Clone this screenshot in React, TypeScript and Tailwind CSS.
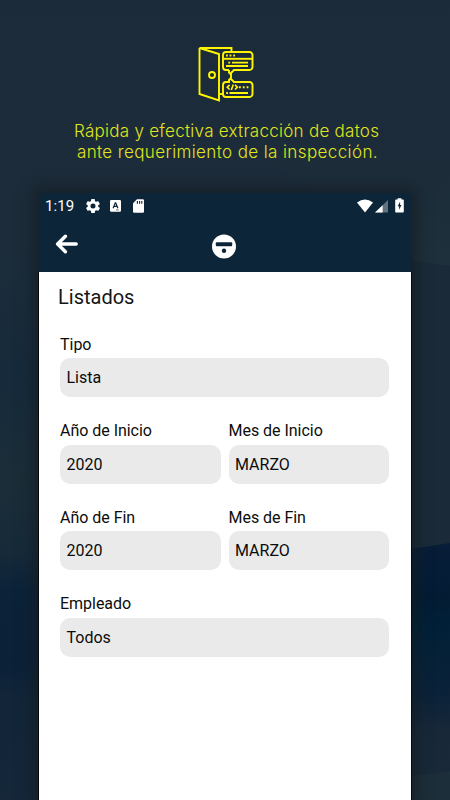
interface FieldProps {
  label: string;
  value: string;
}

function Field({ label, value }: FieldProps) {
  return (
    <div className="flex-1 min-w-0">
      <div className="h-[23.5px] text-[16px] leading-[19px] tracking-[-0.03px] text-[#0c0c0c]">{label}</div>
      <div className="h-[39px] rounded-[10px] bg-[#eaeaea] px-[6.5px] text-[16px] leading-[39px] text-[#0c0c0c]">
        {value}
      </div>
    </div>
  );
}

const ROWS: FieldProps[][] = [
  [{ label: 'Tipo', value: 'Lista' }],
  [{ label: 'Año de Inicio', value: '2020' }, { label: 'Mes de Inicio', value: 'MARZO' }],
  [{ label: 'Año de Fin', value: '2020' }, { label: 'Mes de Fin', value: 'MARZO' }],
  [{ label: 'Empleado', value: 'Todos' }],
];

const TAGLINE = [
  { text: 'Rápida y efectiva extracción de datos', className: 'tracking-[0.27px]' },
  { text: 'ante requerimiento de la inspección.', className: 'tracking-[0.39px]' },
];

function Backdrop() {
  return (
    <svg className="absolute inset-0" width="450" height="800" viewBox="0 0 450 800">
      <defs>
        <linearGradient id="left" x1="0" y1="0" x2="0" y2="1">
          <stop offset="0" stopColor="#1c2b39" />
          <stop offset="0.3" stopColor="#1c2c3a" />
          <stop offset="0.48" stopColor="#162a3b" />
          <stop offset="0.6" stopColor="#1b2d38" />
          <stop offset="0.69" stopColor="#162a39" />
          <stop offset="0.74" stopColor="#0b2239" />
          <stop offset="0.83" stopColor="#0b2138" />
          <stop offset="0.87" stopColor="#122539" />
          <stop offset="1" stopColor="#152739" />
        </linearGradient>
        <linearGradient id="upper" x1="0" y1="130" x2="0" y2="262" gradientUnits="userSpaceOnUse">
          <stop offset="0" stopColor="#1c2b39" />
          <stop offset="1" stopColor="#1e303c" />
        </linearGradient>
        <linearGradient id="right" x1="0" y1="540" x2="0" y2="800" gradientUnits="userSpaceOnUse">
          <stop offset="0" stopColor="#081d38" />
          <stop offset="0.22" stopColor="#031c34" />
          <stop offset="0.32" stopColor="#002037" />
          <stop offset="0.6" stopColor="#0b2239" />
          <stop offset="0.74" stopColor="#182838" />
          <stop offset="1" stopColor="#192938" />
        </linearGradient>
      </defs>
      <rect width="450" height="800" fill="url(#left)" />
      <path d="M225 130H450V266L411 260Z" fill="url(#upper)" />
      <path d="M411 261L450 266V544L411 549Z" fill="#1a2a38" />
      <path d="M411 549L450 543V800H411Z" fill="url(#right)" />
      <path d="M411 776L450 771V800H411Z" fill="#1c2e39" />
    </svg>
  );
}

function DoorIcon() {
  return (
    <svg width="56" height="56" viewBox="0 0 56 56" fill="none" stroke="#fff500" strokeWidth="1.9">
      <path d="M1.5 2V48L21 54.5V8L1.5 2H33.5V5.5" />
      <path d="M21 48H25" />
      <circle cx="14" cy="29" r="3" />
      <path d="M31 24H28A3 3 0 0 1 25 21V9A3 3 0 0 1 28 6H51.5A3 3 0 0 1 54.5 9V21A3 3 0 0 1 51.5 24H36L33 27V33L36 36H51.5A3 3 0 0 1 54.5 39V48A3 3 0 0 1 51.5 51H28A3 3 0 0 1 25 48V39A3 3 0 0 1 28 36H31V34L33 32" />
      <path d="M31 24V26.5L33 28.5" />
      <path d="M25 12.8H54.5" />
      <path d="M28 9.4H37.5" strokeWidth="2" strokeDasharray="1.8 1.8" />
      <path d="M30.3 16.6H32.2M34 16.6H50M28 20H50" />
      <path d="M31.7 38.9L29.2 41.2L31.7 43.5M37 38.9L39.4 41.2L37 43.5M35.3 38.4L33.3 44" strokeWidth="1.6" />
      <path d="M41 41.2H50.5" strokeWidth="2" strokeDasharray="1.8 2" />
      <path d="M28.2 47H30M31.5 47H50" />
    </svg>
  );
}

function StatusBar() {
  return (
    <div className="flex h-[26px] items-center pl-[6px] pr-[7px]">
      <span className="w-[41px] text-[15px] leading-[26px] tracking-[0.1px] text-white">1:19</span>
      <svg width="14" height="14" viewBox="2 2 20 20" fill="#fff">
        <path d="M19.4 13a7.5 7.5 0 0 0 0-2l2.1-1.6a.5.5 0 0 0 .1-.7l-2-3.4a.5.5 0 0 0-.6-.2l-2.5 1a7 7 0 0 0-1.7-1L14.5 2.5A.5.5 0 0 0 14 2h-4a.5.5 0 0 0-.5.4l-.4 2.7a7 7 0 0 0-1.7 1l-2.5-1a.5.5 0 0 0-.6.2l-2 3.4a.5.5 0 0 0 .1.7L4.5 11a8 8 0 0 0 0 2l-2.1 1.6a.5.5 0 0 0-.1.7l2 3.4c.1.2.4.3.6.2l2.5-1a7 7 0 0 0 1.7 1l.4 2.6c0 .3.2.5.5.5h4c.3 0 .5-.2.5-.5l.4-2.6a7 7 0 0 0 1.7-1l2.5 1c.2.1.5 0 .6-.2l2-3.4a.5.5 0 0 0-.1-.7ZM12 15.6a3.6 3.6 0 1 1 0-7.2 3.6 3.6 0 0 1 0 7.2Z" />
      </svg>
      <svg className="ml-[10px]" width="11" height="12" viewBox="0 0 11 12">
        <rect width="11" height="11.7" rx="1.2" fill="#fff" />
        <path d="M3.1 8.2L5.3 2.8H5.7L7.9 8.2M4 6.4H7" fill="none" stroke="#0d2538" strokeWidth="1.2" />
        <path d="M6 9.9H8.8" stroke="#0d2538" strokeWidth="0.6" />
      </svg>
      <svg className="ml-[12px]" width="11" height="14" viewBox="0 0 11 14">
        <path d="M4 0.3H9.8A1.2 1.2 0 0 1 11 1.5V12.5A1.2 1.2 0 0 1 9.8 13.7H1.2A1.2 1.2 0 0 1 0 12.5V4.3Z" fill="#fff" />
        <path d="M4.4 2V4.7M6.6 2V4.7M8.8 2V4.7" stroke="#0d2538" strokeWidth="1.1" />
      </svg>
      <div className="-mt-px ml-auto flex items-center">
        <svg width="16" height="14" viewBox="0 0 16 14">
          <path d="M0 3.4Q8-2.6 16 3.4L8 13.4Z" fill="#fff" />
        </svg>
        <svg className="ml-[2px]" width="13" height="14" viewBox="0 0 13 14">
          <path d="M13 0.9V13.6H0Z" fill="#5f7280" />
          <path d="M7.6 6.2V13.6H0Z" fill="#fff" />
        </svg>
        <svg className="ml-[7px]" width="9" height="15" viewBox="0 0 9 15">
          <path d="M2.6 0.3H6.4V1.6H8A0.8 0.8 0 0 1 8.8 2.4V13.8A0.8 0.8 0 0 1 8 14.6H1A0.8 0.8 0 0 1 0.2 13.8V2.4A0.8 0.8 0 0 1 1 1.6H2.6Z" fill="#fff" />
          <path d="M5.1 3.8L2.6 8.3H4.1V11.8L6.5 7.1H5.1Z" fill="#0d2538" />
        </svg>
      </div>
    </div>
  );
}

export default function App() {
  return (
    <div className="relative h-[800px] w-[450px] overflow-hidden bg-[#1c2b39]">
      <Backdrop />
      <div className="relative flex h-full flex-col items-center">
        <div className="mt-[46px] ml-[2px] h-[56px] w-[56px]">
          <DoorIcon />
        </div>
        <div
          className="mt-[19px] ml-[2px] h-[72px] w-[304px] whitespace-nowrap text-right text-[17px] font-light leading-[20.5px] text-[#e0e71b]"
          style={{ fontFamily: 'Inter, sans-serif' }}
        >
          {TAGLINE.map(line => (
            <div key={line.text} className={line.className}>{line.text}</div>
          ))}
        </div>

        {/* Phone */}
        <div
          className="h-[607px] w-[372px] bg-white shadow-[0_0_14px_5px_rgba(20,28,34,0.75)]"
          style={{ fontFamily: 'Roboto, sans-serif' }}
        >
          <header className="h-[79px] bg-[#0d2538]">
            <StatusBar />
            <div className="grid h-[53px] grid-cols-3 items-center px-[13px]">
              <svg className="-mt-[4px] ml-[3px]" width="24" height="20" viewBox="0 0 24 20" fill="none" stroke="#fff" strokeWidth="3.4" strokeLinecap="round" strokeLinejoin="round">
                <path d="M10.4 2.3L2.6 10L10.4 17.7M2.8 10H21.2" />
              </svg>
              <svg className="mt-px mr-px justify-self-center" width="25" height="25" viewBox="0 0 25 25">
                <circle cx="12" cy="12.5" r="12" fill="#fff" />
                <rect x="3.8" y="8.3" width="16.4" height="4" rx="1" fill="#0d2538" />
                <circle cx="12" cy="16.8" r="2.2" fill="#0d2538" />
              </svg>
            </div>
          </header>
          <main className="h-[528px] pl-[21px] pr-[22px] pt-[13px] shadow-[0_1px_0_1px_#05090d]">
            <h1 className="-ml-[2px] h-[49.5px] text-[20px] leading-[24px] text-[#151515]">Listados</h1>
            <div className="flex flex-col gap-[24px]">
              {ROWS.map((row, i) => (
                <div key={i} className="flex gap-[8px]">
                  {row.map(f => (
                    <Field key={f.label} label={f.label} value={f.value} />
                  ))}
                </div>
              ))}
            </div>
          </main>
        </div>
      </div>
    </div>
  );
}
